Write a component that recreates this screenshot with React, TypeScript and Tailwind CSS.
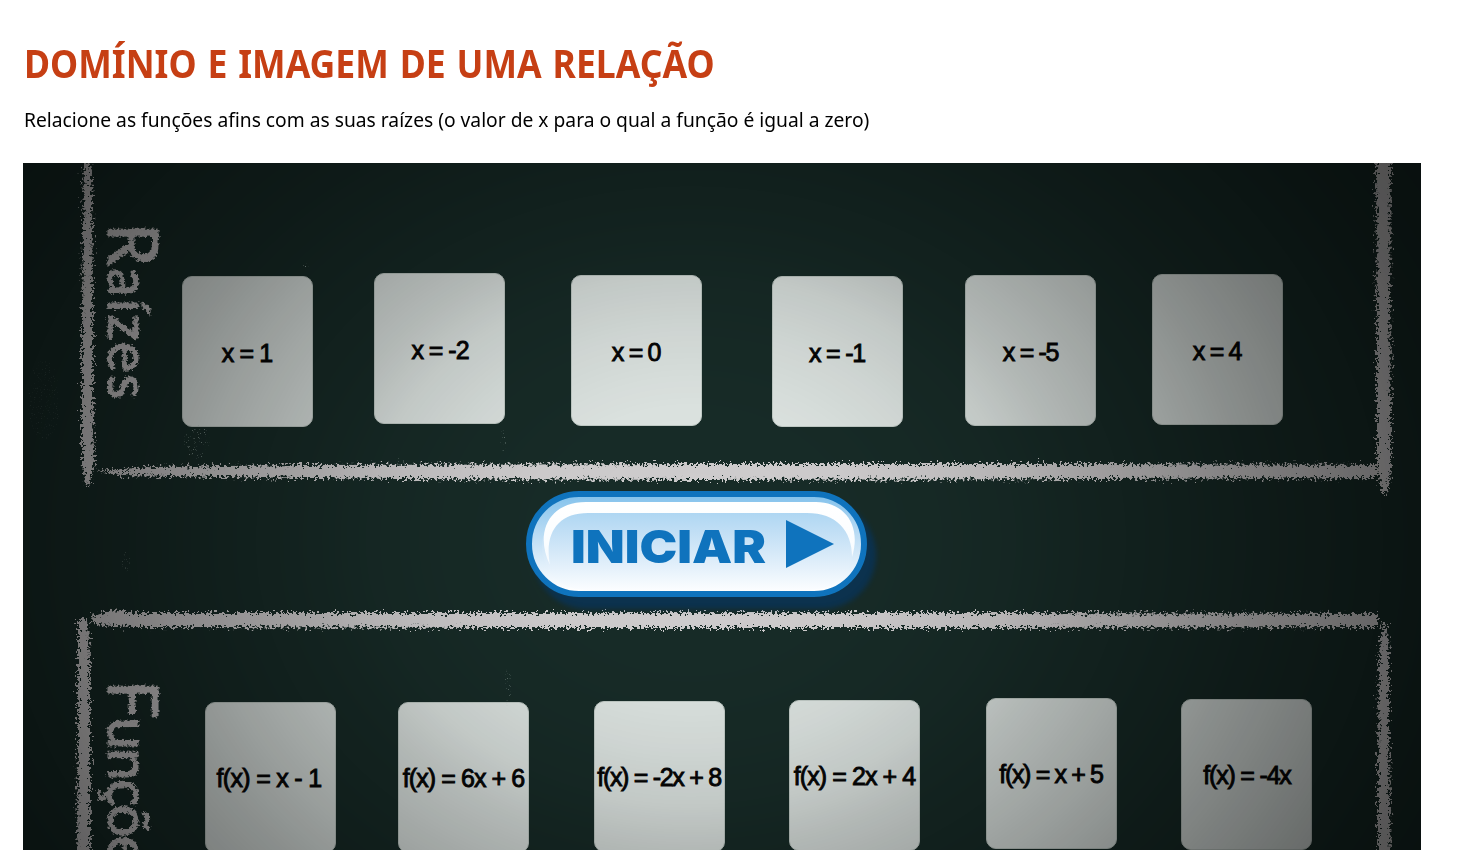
const roots = [
  { label: 'x = 1', place: 'mt-[3px] pt-[5px] tracking-[-0.9px]' },
  { label: 'x = -2', place: 'ml-[61px] pt-[5px] pl-[2px] tracking-[-1px]' },
  { label: 'x = 0', place: 'mt-[2px] ml-[66px] pt-[5px] tracking-[-1.3px]' },
  { label: 'x = -1', place: 'mt-[3px] ml-[70px] pt-[5px] tracking-[-1.2px]' },
  { label: 'x = -5', place: 'mt-[2px] ml-[62px] pt-[5px] pl-px tracking-[-1.3px]' },
  { label: 'x = 4', place: 'mt-px ml-[56px] pt-[5px] tracking-[-1.3px]' },
];

const functions = [
  { label: 'f(x) = x - 1', place: 'mt-[4px] pt-[3px] pr-[2px] tracking-[-0.7px]' },
  { label: 'f(x) = 6x + 6', place: 'mt-[4px] ml-[62px] pt-[3px] pl-px tracking-[-0.9px]' },
  { label: 'f(x) = -2x + 8', place: 'mt-[3px] ml-[65px] pt-[3px] tracking-[-1.3px]' },
  { label: 'f(x) = 2x + 4', place: 'mt-[2px] ml-[64px] pt-[3px] pl-px tracking-[-0.9px]' },
  { label: 'f(x) = x + 5', place: 'ml-[66px] pt-[3px] tracking-[-1.35px]' },
  { label: 'f(x) = -4x', place: 'mt-px ml-[64px] pt-[3px] pl-[2px] tracking-[-1.2px]' },
];

function Card({ label, place }: { label: string; place: string }) {
  return (
    <div
      className={`${place} flex h-[151px] w-[131px] shrink-0 items-center justify-center rounded-[10px] border border-[#c3cdc8] bg-[#dfe6e3] text-[25px] whitespace-nowrap text-[#050505] [-webkit-text-stroke:0.9px_#050505]`}
    >
      {label}
    </div>
  );
}

function Chalk() {
  return (
    <svg className="absolute inset-0" width="1398" height="687" viewBox="23 163 1398 687">
      <defs>
        <filter id="chalk" filterUnits="userSpaceOnUse" x="23" y="163" width="1398" height="720" colorInterpolationFilters="sRGB">
          <feTurbulence type="fractalNoise" baseFrequency="0.4" numOctaves="4" seed="4" result="n" />
          <feDisplacementMap in="SourceGraphic" in2="n" scale="14" xChannelSelector="R" yChannelSelector="G" result="s" />
          <feGaussianBlur in="s" stdDeviation="0.6" />
        </filter>
        <filter id="letters" x="-10%" y="-10%" width="120%" height="120%" colorInterpolationFilters="sRGB">
          <feTurbulence type="fractalNoise" baseFrequency="0.4" numOctaves="3" seed="9" result="n" />
          <feDisplacementMap in="SourceGraphic" in2="n" scale="6" xChannelSelector="R" yChannelSelector="G" result="s" />
          <feGaussianBlur in="s" stdDeviation="0.5" />
        </filter>
        <filter id="dust" x="0" y="0" width="100%" height="100%">
          <feTurbulence type="fractalNoise" baseFrequency="0.75" numOctaves="2" seed="7" result="n" />
          <feColorMatrix in="n" values="0 0 0 0 .5  0 0 0 0 .6  0 0 0 0 .56  9 0 0 0 -5.8" result="d" />
          <feComposite in="d" in2="SourceGraphic" operator="in" />
        </filter>
      </defs>
      <g filter="url(#chalk)" fill="#d0cecf">
        <path d="M84 155H90L92 200L93 290V400L94 465L89 486H86L82 460V330L83 230Z" />
        <path d="M96 471L150 467L300 465L700 464L1100 464L1376 465V478L1100 479L700 480L400 479L220 477L120 475Z" />
        <path d="M1376 155H1391L1390 300L1391 410V470L1387 493H1382L1377 465L1377 340Z" />
        <path d="M92 617L108 611L124 610V613L500 613L1000 613L1378 614V627L1000 628L500 628L130 627L95 625Z" />
        <path d="M78 619H88L90 660V870H77L78 740Z" />
        <path d="M1382 622H1386L1389 650V740L1391 870H1378L1378 760L1379 660Z" />
      </g>
      <g filter="url(#dust)" fill="#fff">
        <ellipse cx="197" cy="442" rx="13" ry="17" opacity=".55" />
        <ellipse cx="306" cy="267" rx="4" ry="4" opacity=".7" />
        <ellipse cx="503" cy="439" rx="3" ry="13" opacity=".5" />
        <ellipse cx="508" cy="688" rx="3" ry="20" opacity=".5" />
        <ellipse cx="44" cy="400" rx="16" ry="40" opacity=".15" />
        <ellipse cx="126" cy="562" rx="4" ry="10" opacity=".3" />
      </g>
    </svg>
  );
}

function StartButton() {
  return (
    <button
      type="button"
      className="relative z-20 flex h-[106px] w-[341px] items-center rounded-full border-[6px] border-[#0f73bd] bg-linear-to-b from-[#86c3ec] via-[#d3e8f8] via-60% to-white pl-[39px] shadow-[8px_11px_5px_1px_rgba(8,52,91,0.75)]"
    >
      <svg className="absolute -top-1.5 -left-1.5" width="341" height="106" viewBox="526 491 341 106">
        <defs>
          <linearGradient id="face" x1="0" y1="0" x2="0" y2="1">
            <stop offset="0" stopColor="#a6d2f1" />
            <stop offset=".55" stopColor="#d4e8f8" />
            <stop offset="1" stopColor="#fbfdff" />
          </linearGradient>
          <linearGradient id="gloss" x1="0" y1="0" x2="0" y2="1">
            <stop offset="0" stopColor="#fff" />
            <stop offset=".65" stopColor="#fafdff" />
            <stop offset="1" stopColor="#fff" stopOpacity=".7" />
          </linearGradient>
        </defs>
        <rect x="542" y="504" width="312" height="86" rx="43" fill="url(#face)" />
        <path
          d="M550 565C535 535 547 502 586 502H816C844 502 862 525 852 557C852 530 836 513 807 513H588C558 513 544 533 550 565Z"
          fill="url(#gloss)"
        />
        <path d="M786 520L834 544L786 568Z" fill="#0f73bd" />
      </svg>
      <span className="relative mt-[3px] origin-left scale-x-[1.1] font-['Inter'] text-[46px] leading-none font-black text-[#0f73bd]">
        INICIAR
      </span>
    </button>
  );
}

export default function App() {
  return (
    <main className="flex h-[850px] w-[1460px] flex-col overflow-hidden bg-white pl-[23px]">
      <header className="flex h-[163px] shrink-0 flex-col pt-[36px] pl-px font-['Noto_Sans',sans-serif]">
        <h1 className="w-max origin-left scale-x-[0.89] text-[40px] leading-[54px] font-bold whitespace-nowrap text-[#c63f14] [word-spacing:1.8px]">
          DOMÍNIO E IMAGEM DE UMA RELAÇÃO
        </h1>
        <p className="mt-[15px] w-max origin-left scale-x-[0.938] text-[20.5px] leading-[28px] whitespace-nowrap text-black">
          Relacione as funções afins com as suas raízes (o valor de x para o qual a função é igual a zero)
        </p>
      </header>
      <section className="relative flex h-[687px] w-[1398px] shrink-0 flex-col overflow-hidden bg-[#182c28] font-['Liberation_Sans',sans-serif]">
        <Chalk />
        <div className="flex h-[328px] shrink-0 pt-[110px] pl-[158.5px]">
          {roots.map((c) => (
            <Card key={c.label} {...c} />
          ))}
        </div>
        <div className="flex h-[207px] shrink-0 pl-[503px]">
          <StartButton />
        </div>
        <div className="flex shrink-0 pl-[181.5px]">
          {functions.map((c) => (
            <Card key={c.label} {...c} />
          ))}
        </div>
        <div className="absolute top-[60px] left-[143px] origin-top-left rotate-90 font-['Lato',sans-serif] text-[58px] leading-[64px] tracking-[1.8px] whitespace-nowrap text-[#d0cecf] [-webkit-text-stroke:1.2px_#d0cecf] [filter:url(#letters)]">
          <span className="text-[69px]">R</span>aízes
        </div>
        <div className="absolute top-[517px] left-[143px] origin-top-left rotate-90 font-['Lato',sans-serif] text-[58px] leading-[64px] tracking-[-1.6px] whitespace-nowrap text-[#d0cecf] [-webkit-text-stroke:1.2px_#d0cecf] [filter:url(#letters)]">
          <span className="text-[69px]">F</span>unções
        </div>
        <div className="pointer-events-none absolute inset-0 z-10 bg-[radial-gradient(ellipse_910px_740px_at_668px_377px,rgba(0,0,0,0)_0%,rgba(0,0,0,.02)_18%,rgba(0,0,0,.07)_28%,rgba(0,0,0,.13)_36%,rgba(0,0,0,.20)_42%,rgba(0,0,0,.31)_54%,rgba(0,0,0,.39)_62%,rgba(0,0,0,.48)_73%,rgba(0,0,0,.58)_85%,rgba(0,0,0,.65)_100%)]" />
      </section>
    </main>
  );
}
